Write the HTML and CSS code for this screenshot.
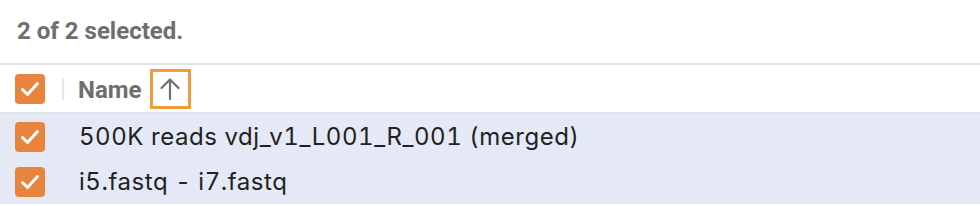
FILE: index.html
```html
<!DOCTYPE html>
<html>
<head>
<meta charset="utf-8">
<link rel="stylesheet" href="styles.css">
</head>
<body>
<div class="summary">2 of 2 selected.</div>
<div class="table">
  <div class="row head">
    <div class="cell-check"><span class="box"><svg viewBox="0 0 30 30" width="30" height="30"><path d="M7.5 15.5 L12.5 20.5 L22.5 9.5" fill="none" stroke="#fff" stroke-width="3" stroke-linecap="round" stroke-linejoin="round"/></svg></span></div>
    <div class="divider"></div>
    <div class="name-head">Name</div>
    <div class="sort"><svg viewBox="0 0 24 24" width="24" height="24"><path d="M12 22 V2.5 M3.5 11 L12 2.5 L20.5 11" fill="none" stroke="#6f6f6f" stroke-width="2.2" stroke-linecap="round" stroke-linejoin="round"/></svg></div>
  </div>
  <div class="row sel">
    <div class="cell-check"><span class="box"><svg viewBox="0 0 30 30" width="30" height="30"><path d="M7.5 15.5 L12.5 20.5 L22.5 9.5" fill="none" stroke="#fff" stroke-width="3" stroke-linecap="round" stroke-linejoin="round"/></svg></span></div>
    <div class="name">500K reads vdj_v1_L001_R_001 (merged)</div>
  </div>
  <div class="row sel">
    <div class="cell-check"><span class="box"><svg viewBox="0 0 30 30" width="30" height="30"><path d="M7.5 15.5 L12.5 20.5 L22.5 9.5" fill="none" stroke="#fff" stroke-width="3" stroke-linecap="round" stroke-linejoin="round"/></svg></span></div>
    <div class="name">i5.fastq - i7.fastq</div>
  </div>
</div>
</body>
</html>
```
FILE: styles.css
```css
html, body { margin: 0; padding: 0; background: #fff; }
body { width: 980px; height: 206px; overflow: hidden; }
.summary {
  height: 63px;
  box-sizing: border-box;
  padding: 17px 0 0 17px;
  font-family: Roboto, "Liberation Sans", sans-serif;
  font-weight: 700;
  font-size: 24px;
  line-height: 28px;
  color: #6e6e6e;
}
.table { border-top: 2px solid #dfe3e8; }
.row { display: flex; align-items: center; }
.head { height: 47px; border-bottom: 2px solid #dfe3e8; }
.sel {
  height: 45px;
  background: #e4e9f5;
  font-family: Inter, "Noto Sans", sans-serif;
  font-size: 24px;
  letter-spacing: 0.55px;
  font-feature-settings: "tnum";
  color: #222;
}
.cell-check { width: 60px; padding-left: 15px; box-sizing: border-box; display: flex; align-items: center; }
.box { width: 30px; height: 30px; border-radius: 4px; background: #e8843c; display: block; }
.box svg { display: block; }
.divider { width: 2px; height: 22px; background: #e6e6e6; margin-left: 2px; }
.name-head {
  margin-left: 14px;
  padding-top: 3px;
  font-family: Roboto, "Liberation Sans", sans-serif;
  font-weight: 700;
  font-size: 24px;
  color: #6e6e6e;
}
.sort {
  margin-left: 8px;
  width: 41px; height: 40px;
  box-sizing: border-box;
  border: 3px solid #f29b38;
  display: flex; align-items: center; justify-content: center;
}
.sort svg { display: block; }
.name { margin-left: 19px; }
```
